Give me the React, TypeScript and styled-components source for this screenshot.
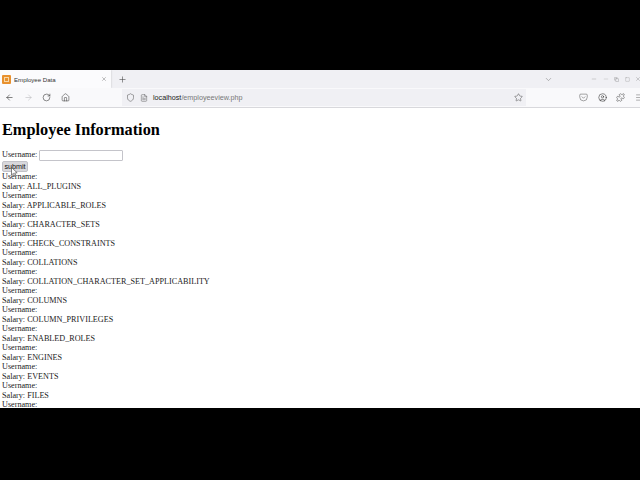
import React from "react";
import styled, { createGlobalStyle } from "styled-components";
import {
  ArrowLeft,
  ArrowRight,
  RotateCw,
  Home,
  Shield,
  FileText,
  Star,
  Plus,
  X,
  ChevronDown,
  Minus,
  Puzzle,
  CircleUser,
  Menu,
  Pocket,
  Copy,
  Square,
} from "lucide-react";

const tables = [
  "ALL_PLUGINS",
  "APPLICABLE_ROLES",
  "CHARACTER_SETS",
  "CHECK_CONSTRAINTS",
  "COLLATIONS",
  "COLLATION_CHARACTER_SET_APPLICABILITY",
  "COLUMNS",
  "COLUMN_PRIVILEGES",
  "ENABLED_ROLES",
  "ENGINES",
  "EVENTS",
  "FILES",
];

const App = () => {
  return (
    <Screen>
      <GlobalStyle />
      <Browser>
        <TabStrip>
          <Tab>
            <Favicon>
              <FaviconInner />
            </Favicon>
            <TabTitle>Employee Data</TabTitle>
            <X size={6} strokeWidth={1.5} color="#555" />
          </Tab>
          <NewTab>
            <Plus size={9} strokeWidth={1.5} color="#444" />
          </NewTab>
          <TabSpacer />
          <ChevronDown size={9} strokeWidth={1.2} color="#666" />
          <WindowControls>
            <Minus size={6} strokeWidth={1.2} color="#777" />
            <Minus size={6} strokeWidth={1.2} color="#999" />
            <Copy size={5} strokeWidth={1.4} color="#666" />
            <Square size={5} strokeWidth={1.4} color="#888" />
            <X size={6} strokeWidth={1.2} color="#666" />
          </WindowControls>
        </TabStrip>
        <NavBar>
          <NavButtons>
            <ArrowLeft size={9} strokeWidth={1.6} color="#333" />
            <ArrowRight size={9} strokeWidth={1.4} color="#b5b5b8" />
            <RotateCw size={9} strokeWidth={1.5} color="#333" />
            <Home size={9} strokeWidth={1.4} color="#333" />
          </NavButtons>
          <UrlBar>
            <Shield size={9} strokeWidth={1.3} color="#444" />
            <FileText size={8} strokeWidth={1.3} color="#444" />
            <UrlText>
              <strong>localhost</strong>/employeeview.php
            </UrlText>
            <UrlSpacer />
            <Star size={9} strokeWidth={1.3} color="#444" />
          </UrlBar>
          <ToolIcons>
            <Pocket size={9} strokeWidth={1.4} color="#555" />
            <CircleUser size={9} strokeWidth={1.5} color="#333" />
            <Puzzle size={9} strokeWidth={1.4} color="#444" />
            <Menu size={9} strokeWidth={1.2} color="#555" />
          </ToolIcons>
        </NavBar>
        <Page>
          <Heading>Employee Information</Heading>
          <Form>
            <FieldLine>
              Username: <TextInput type="text" />
            </FieldLine>
            <SubmitButton type="button">submit</SubmitButton>
            <Cursor width="7" height="10" viewBox="0 0 7 10">
              <path d="M0.5 0.5 L0.5 8 L2.4 6.4 L3.8 9.4 L5 8.8 L3.7 6 L6.2 5.8 Z" fill="#fff" stroke="#333" strokeWidth="0.6" />
            </Cursor>
          </Form>
          {tables.map((name) => (
            <Row key={name}>
              <Line>Username:</Line>
              <Line>Salary: {name}</Line>
            </Row>
          ))}
          <Line>Username:</Line>
        </Page>
      </Browser>
    </Screen>
  );
};

const GlobalStyle = createGlobalStyle`
  html, body {
    margin: 0;
    padding: 0;
    background: #000;
  }
`;

const Screen = styled.div`
  width: 640px;
  height: 480px;
  background: #000;
  padding-top: 70px;
  box-sizing: border-box;
  overflow: hidden;
`;

const Browser = styled.div`
  width: 640px;
  height: 338px;
  display: flex;
  flex-direction: column;
  background: #fff;
`;

const TabStrip = styled.div`
  height: 18px;
  flex: none;
  display: flex;
  align-items: center;
  background: #f0f0f4;
`;

const Tab = styled.div`
  width: 111px;
  height: 18px;
  box-sizing: border-box;
  padding: 0 4px 0 2px;
  display: flex;
  align-items: center;
  background: #fbfbfd;
  box-shadow: 0 0 2px rgba(0, 0, 0, 0.2);
`;

const Favicon = styled.div`
  width: 9px;
  height: 9px;
  background: #e8912f;
  border-radius: 1px;
  display: flex;
  align-items: center;
  justify-content: center;
  margin-right: 3px;
`;

const FaviconInner = styled.div`
  width: 5px;
  height: 5px;
  border: 1px solid #f8d8a8;
  box-sizing: border-box;
`;

const TabTitle = styled.span`
  flex: 1;
  font-family: "Liberation Sans", sans-serif;
  font-size: 6.1px;
  color: #333;
`;

const NewTab = styled.div`
  margin-left: 7px;
  display: flex;
`;

const TabSpacer = styled.div`
  flex: 1;
`;

const WindowControls = styled.div`
  width: 50px;
  margin-left: 38px;
  margin-right: -1px;
  display: flex;
  align-items: center;
  justify-content: space-between;
`;

const NavBar = styled.div`
  height: 20px;
  flex: none;
  box-sizing: border-box;
  display: flex;
  align-items: center;
  background: #f9f9fb;
  border-bottom: 1px solid #d8d8dc;
`;

const NavButtons = styled.div`
  width: 122px;
  flex: none;
  box-sizing: border-box;
  padding: 0 1px 0 5px;
  display: flex;
  align-items: center;
  gap: 9.5px;
`;

const UrlBar = styled.div`
  width: 404px;
  height: 17px;
  flex: none;
  box-sizing: border-box;
  padding: 0 3px 0 4px;
  display: flex;
  align-items: center;
  gap: 5px;
  background: #f0f0f4;
`;

const UrlText = styled.span`
  font-family: "Liberation Sans", sans-serif;
  font-size: 7.2px;
  color: #777;

  strong {
    font-weight: 400;
    color: #222;
  }
`;

const UrlSpacer = styled.div`
  flex: 1;
`;

const ToolIcons = styled.div`
  flex: 1;
  box-sizing: border-box;
  padding: 0 0 0 53px;
  display: flex;
  align-items: center;
  gap: 9.5px;
`;

const Page = styled.div`
  flex: 1;
  min-height: 0;
  overflow: hidden;
  background: #fff;
  padding: 0 2px;
  color: #222;
  font-family: "Liberation Serif", serif;
  font-size: 8.17px;
  line-height: 9.5px;
`;

const Heading = styled.h1`
  margin: 12px 0 9px;
  font-size: 16.3px;
  line-height: 20px;
  font-weight: 700;
  color: #000;
`;

const Form = styled.form`
  position: relative;
  margin: 0;
`;

const FieldLine = styled.div`
  height: 12px;
  display: flex;
  align-items: center;
  gap: 2px;
`;

const TextInput = styled.input`
  width: 84px;
  height: 11px;
  padding: 0;
  box-sizing: border-box;
  border: 1px solid #c4c4ca;
  border-radius: 1px;
  background: #fff;
`;

const SubmitButton = styled.button`
  display: block;
  width: 26px;
  height: 11px;
  margin: 0;
  padding: 0;
  border: 1px solid #c2c2c8;
  border-radius: 2px;
  background: #d8d8dc;
  color: #111;
  font-family: "Liberation Sans", sans-serif;
  font-size: 7.2px;
  line-height: 9px;
`;

const Cursor = styled.svg`
  position: absolute;
  left: 9px;
  top: 18px;
`;

const Row = styled.div``;

const Line = styled.div`
  height: 9.5px;
  white-space: nowrap;
`;

export default App;
